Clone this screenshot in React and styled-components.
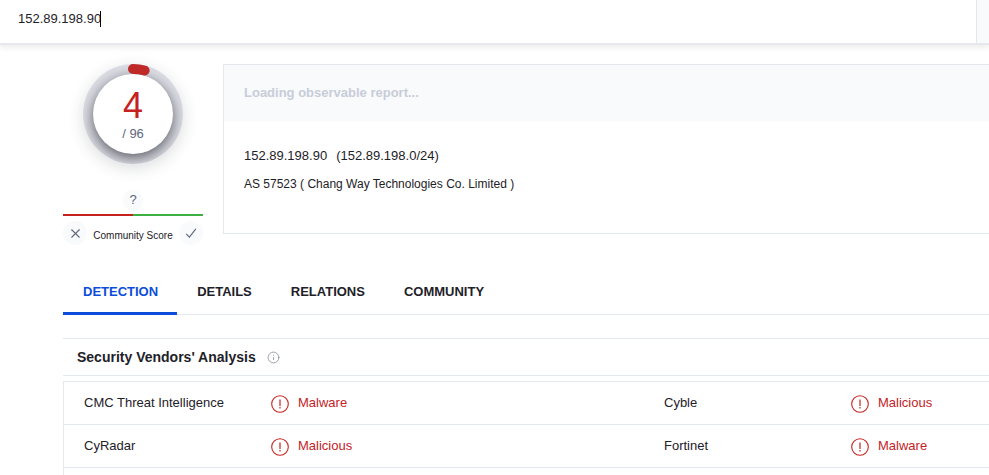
import styled, { createGlobalStyle, ThemeProvider } from 'styled-components';
import { X, Info } from 'lucide-react';

const theme = {
  font: '"Liberation Sans", Arial, sans-serif',
  colors: {
    text: '#1e2128',
    muted: '#60677f',
    faint: '#c8cdd8',
    border: '#e3e7ee',
    surface: '#f8fafc',
    primary: '#0b4dda',
    danger: '#c5221f',
    success: '#3cb043',
  },
};

const vendors = [
  [
    { name: 'CMC Threat Intelligence', verdict: 'Malware' },
    { name: 'Cyble', verdict: 'Malicious' },
  ],
  [
    { name: 'CyRadar', verdict: 'Malicious' },
    { name: 'Fortinet', verdict: 'Malware' },
  ],
];

const tabs = ['Detection', 'Details', 'Relations', 'Community'];

const GlobalStyle = createGlobalStyle`
  *, *::before, *::after {
    box-sizing: border-box;
  }

  body {
    margin: 0;
    background: #fff;
    color: ${({ theme }) => theme.colors.text};
    font: 13px/16px ${({ theme }) => theme.font};
  }

  button, input {
    margin: 0;
    padding: 0;
    border: 0;
    background: none;
    color: inherit;
    font: inherit;
  }

  h1, h2, p {
    margin: 0;
  }
`;

const Page = styled.div`
  display: flex;
  flex-direction: column;
  min-height: 100vh;
`;

const TopBar = styled.header`
  display: flex;
  height: 45px;
  border-bottom: 2px solid #e7e8eb;
  box-shadow: 0 2px 6px rgba(40, 40, 30, 0.1);
`;

const SearchField = styled.label`
  flex: 1;
  display: flex;
  align-items: center;
  padding: 0 18px 6px;
`;

const SearchInput = styled.input`
  field-sizing: content;
  outline: none;
`;

const Caret = styled.span`
  width: 1px;
  height: 16px;
  margin-left: -1px;
  background: #000;
`;

const SearchButton = styled.button`
  flex: 0 0 13px;
  border-left: 1px solid ${({ theme }) => theme.colors.border};
  background: ${({ theme }) => theme.colors.surface};
`;

const Main = styled.main`
  flex: 1;
  display: flex;
  flex-direction: column;
  padding: 19px 0 0 63px;
`;

const Overview = styled.section`
  display: flex;
  align-items: flex-start;
  gap: 20px;
`;

const ScoreColumn = styled.div`
  flex: 0 0 140px;
  display: flex;
  flex-direction: column;
  align-items: center;
`;

const Gauge = styled.div`
  display: grid;
  width: 100px;
  height: 100px;
  border-radius: 50%;
  box-shadow: 0 4px 16px rgba(40, 42, 54, 0.16);

  > * {
    grid-area: 1 / 1;
  }
`;

const GaugeFace = styled.div`
  place-self: center;
  display: flex;
  flex-direction: column;
  align-items: center;
  width: 80px;
  height: 80px;
  padding-top: 12px;
  border-radius: 50%;
  background: #fff;
  box-shadow: 0 4px 14px rgba(30, 32, 42, 0.7);
`;

const GaugeRing = styled.svg`
  width: 100px;
  height: 100px;
`;

const Track = styled.div`
  overflow: hidden;
  display: grid;
  border-radius: 50%;
  background: #dddee5;
`;

const Positives = styled.span`
  color: ${({ theme }) => theme.colors.danger};
  font-size: 36px;
  line-height: 40px;
`;

const Total = styled.span`
  color: ${({ theme }) => theme.colors.muted};
`;

const Pin = styled.div`
  display: grid;
  justify-items: center;
  height: 24px;
  margin-top: 26px;
  color: ${({ theme }) => theme.colors.muted};

  > * {
    grid-area: 1 / 1;
  }
`;

const PinLabel = styled.span`
  line-height: 20px;
`;

const VoteBar = styled.div`
  align-self: stretch;
  height: 2px;
  background: linear-gradient(
    90deg,
    ${({ theme }) => theme.colors.danger} 50%,
    ${({ theme }) => theme.colors.success} 50%
  );
`;

const VoteRow = styled.div`
  align-self: stretch;
  display: flex;
  align-items: center;
  justify-content: space-between;
  margin-top: 5px;
  font-size: 10px;
`;

const VoteLabel = styled.span`
  padding-top: 6px;
`;

const VoteButton = styled.button`
  display: grid;
  place-items: center;
  width: 24px;
  height: 24px;
  border-radius: 50%;
  background: ${({ theme }) => theme.colors.surface};
  color: ${({ theme }) => theme.colors.muted};
`;

const ReportCard = styled.article`
  flex: 1;
  height: 170px;
  border: 1px solid ${({ theme }) => theme.colors.border};
  border-right: 0;
`;

const ReportStatus = styled.p`
  padding: 20px;
  background: ${({ theme }) => theme.colors.surface};
  color: ${({ theme }) => theme.colors.faint};
  font-weight: 700;
`;

const ReportBody = styled.div`
  display: grid;
  gap: 12px;
  padding: 27px 20px;
`;

const Address = styled.h1`
  display: flex;
  gap: 9px;
  font-size: 13px;
  font-weight: 400;
`;

const Owner = styled.p`
  font-size: 12px;
`;

const Tabs = styled.nav`
  display: flex;
  margin-top: 24px;
  border-bottom: 1px solid ${({ theme }) => theme.colors.border};
`;

const Tab = styled.button`
  height: 46px;
  margin-bottom: -1px;
  padding: 3px 19px 0 20px;
  border-bottom: 3px solid ${({ $active, theme }) => ($active ? theme.colors.primary : 'transparent')};
  color: ${({ $active, theme }) => ($active ? theme.colors.primary : 'inherit')};
  font-weight: 700;
  text-transform: uppercase;
`;

const SectionHeader = styled.div`
  display: flex;
  align-items: center;
  gap: 11px;
  height: 38px;
  margin-top: 23px;
  padding-left: 14px;
  border: solid ${({ theme }) => theme.colors.border};
  border-width: 1px 0;
`;

const SectionTitle = styled.h2`
  font-size: 14px;
`;

const InfoIcon = styled(Info)`
  color: #8d93a5;
`;

const Results = styled.section`
  flex: 1;
  margin-top: 5px;
  border: solid ${({ theme }) => theme.colors.border};
  border-width: 1px 0 0 1px;
`;

const VendorTable = styled.table`
  width: 100%;
  table-layout: fixed;
  border-spacing: 0;
`;

const NameColumn = styled.col`
  width: 207px;
`;

const VerdictColumn = styled.col`
  width: 373px;
`;

const VendorName = styled.th`
  height: 43px;
  padding: 0 0 0 20px;
  border-bottom: 1px solid ${({ theme }) => theme.colors.border};
  font-weight: 400;
  text-align: left;
`;

const VendorVerdict = styled.td`
  padding: 0;
  border-bottom: 1px solid ${({ theme }) => theme.colors.border};
  color: ${({ theme }) => theme.colors.danger};
`;

const Verdict = styled.span`
  display: flex;
  align-items: center;
  gap: 9px;
`;

const AlertSvg = styled.svg`
  margin-top: 2px;
`;

function AlertIcon() {
  return (
    <AlertSvg width="18" height="18" viewBox="0 0 18 18" fill="none" stroke="currentColor" aria-hidden="true">
      <circle cx="9" cy="9" r="8.3" strokeWidth="1.1" />
      <path d="M9 4.500v6.500M9 12v1.500" strokeWidth="1.2" />
    </AlertSvg>
  );
}

function CheckIcon() {
  return (
    <svg width="12" height="12" viewBox="0 0 12 12" fill="none" stroke="currentColor" aria-hidden="true">
      <path d="M1.200 6.800 4.400 10.200 10.800 1.800" strokeWidth="1.100" />
    </svg>
  );
}

function ScoreGauge({ positives, total }) {
  const length = (positives / total) * 2 * Math.PI * 45;

  return (
    <Gauge>
      <Track>
        <GaugeFace>
          <Positives>{positives}</Positives>
          <Total>/ {total}</Total>
        </GaugeFace>
      </Track>
      <GaugeRing viewBox="0 0 100 100" fill="none" aria-hidden="true">
        <circle
          cx="50"
          cy="50"
          r="45"
          stroke="#bf2a28"
          strokeWidth="10"
          strokeLinecap="round"
          strokeDasharray={`${length} 400`}
          transform="rotate(-90 50 50)"
        />
      </GaugeRing>
    </Gauge>
  );
}

function App() {
  return (
    <ThemeProvider theme={theme}>
      <GlobalStyle />
      <Page>
        <TopBar>
          <SearchField>
            <SearchInput type="text" aria-label="Search" defaultValue="152.89.198.90" />
            <Caret />
          </SearchField>
          <SearchButton type="button" aria-label="Run search" />
        </TopBar>

        <Main>
          <Overview>
            <ScoreColumn>
              <ScoreGauge positives={4} total={96} />
              <Pin>
                <svg width="22" height="24" viewBox="0 0 22 24" fill="#f8fafc" aria-hidden="true">
                  <path d="M11 0a10.5 10.5 0 0 1 10.5 10.5c0 5-4.5 8-10.5 13.5C5 18.5 .5 15.5 .5 10.5A10.5 10.5 0 0 1 11 0z" />
                </svg>
                <PinLabel>?</PinLabel>
              </Pin>
              <VoteBar />
              <VoteRow>
                <VoteButton type="button" aria-label="Vote harmful">
                  <X size={15} strokeWidth={1.8} />
                </VoteButton>
                <VoteLabel>Community Score</VoteLabel>
                <VoteButton type="button" aria-label="Vote harmless">
                  <CheckIcon />
                </VoteButton>
              </VoteRow>
            </ScoreColumn>

            <ReportCard>
              <ReportStatus>Loading observable report...</ReportStatus>
              <ReportBody>
                <Address>
                  <span>152.89.198.90</span>
                  <span>(152.89.198.0/24)</span>
                </Address>
                <Owner>AS 57523 ( Chang Way Technologies Co. Limited )</Owner>
              </ReportBody>
            </ReportCard>
          </Overview>

          <Tabs>
            {tabs.map((tab, index) => (
              <Tab key={tab} type="button" $active={index === 0}>
                {tab}
              </Tab>
            ))}
          </Tabs>

          <SectionHeader>
            <SectionTitle>Security Vendors' Analysis</SectionTitle>
            <InfoIcon size={13} strokeWidth={1.6} />
          </SectionHeader>

          <Results>
            <VendorTable>
              <colgroup>
                <NameColumn />
                <VerdictColumn />
                <NameColumn />
                <col />
              </colgroup>
              <tbody>
                {vendors.map((row) => (
                  <tr key={row[0].name}>
                    {row.flatMap(({ name, verdict }) => [
                      <VendorName key={name} scope="row">
                        {name}
                      </VendorName>,
                      <VendorVerdict key={`${name}-verdict`}>
                        <Verdict>
                          <AlertIcon />
                          {verdict}
                        </Verdict>
                      </VendorVerdict>,
                    ])}
                  </tr>
                ))}
              </tbody>
            </VendorTable>
          </Results>
        </Main>
      </Page>
    </ThemeProvider>
  );
}

export default App;
